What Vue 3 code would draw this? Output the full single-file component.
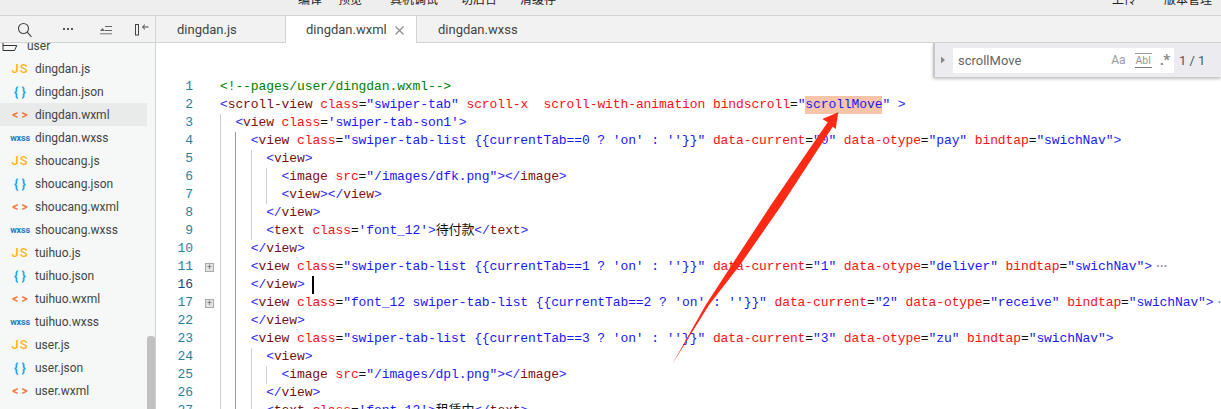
<script setup>
const files = [
  ['dingdan.js', 'js'], ['dingdan.json', 'json'], ['dingdan.wxml', 'wxml', true], ['dingdan.wxss', 'wxss'],
  ['shoucang.js', 'js'], ['shoucang.json', 'json'], ['shoucang.wxml', 'wxml'], ['shoucang.wxss', 'wxss'],
  ['tuihuo.js', 'js'], ['tuihuo.json', 'json'], ['tuihuo.wxml', 'wxml'], ['tuihuo.wxss', 'wxss'],
  ['user.js', 'js'], ['user.json', 'json'], ['user.wxml', 'wxml'],
].map(([name, type, active]) => ({
  name, type, active,
  glyph: { js: 'JS', json: '{ }', wxml: '< >', wxss: 'wxss' }[type],
}))

const source = [
  [1, 0, `<!--pages/user/dingdan.wxml-->`],
  [2, 0, `<scroll-view class="swiper-tab" scroll-x  scroll-with-animation bindscroll="scrollMove" >`],
  [3, 1, `<view class='swiper-tab-son1'>`],
  [4, 2, `<view class="swiper-tab-list {{currentTab==0 ? 'on' : ''}}" data-current="0" data-otype="pay" bindtap="swichNav">`],
  [5, 3, `<view>`],
  [6, 4, `<image src="/images/dfk.png"></image>`],
  [7, 4, `<view></view>`],
  [8, 3, `</view>`],
  [9, 3, `<text class='font_12'>待付款</text>`],
  [10, 2, `</view>`],
  [11, 2, `<view class="swiper-tab-list {{currentTab==1 ? 'on' : ''}}" data-current="1" data-otype="deliver" bindtap="swichNav">`, 'fold'],
  [16, 2, `</view>`, 'cursor'],
  [17, 2, `<view class="font_12 swiper-tab-list {{currentTab==2 ? 'on' : ''}}" data-current="2" data-otype="receive" bindtap="swichNav">`, 'fold'],
  [22, 2, `</view>`],
  [23, 2, `<view class="swiper-tab-list {{currentTab==3 ? 'on' : ''}}" data-current="3" data-otype="zu" bindtap="swichNav">`],
  [24, 3, `<view>`],
  [25, 4, `<image src="/images/dpl.png"></image>`],
  [26, 3, `</view>`],
  [27, 3, `<text class='font_12'>租赁中</text>`],
]

function tokenize(src) {
  const out = []
  const re = /<!--.*?-->|<\/?|\/?>|"[^"]*"|'[^']*'|=|[^\s<>="']+|\s+/g
  let inTag = false
  let expectName = false
  for (const m of src.matchAll(re)) {
    const s = m[0]
    if (s.startsWith('<!--')) out.push({ c: 'cm', s })
    else if (s === '<' || s === '</') { out.push({ c: 'br', s }); inTag = true; expectName = true }
    else if (s === '>' || s === '/>') { out.push({ c: 'br', s }); inTag = false }
    else if (s[0] === '"' && s.includes('scrollMove')) {
      out.push({ c: 'st', s: '"' }, { c: 'st hl', s: 'scrollMove' }, { c: 'st', s: '"' })
    }
    else if (s[0] === '"' || s[0] === "'") out.push({ c: 'st', s })
    else if (s === '=') out.push({ c: 'eq', s })
    else if (/^\s+$/.test(s)) out.push({ c: 'eq', s })
    else if (inTag && expectName) { out.push({ c: 'tg', s }); expectName = false }
    else if (inTag) out.push({ c: 'at', s })
    else out.push({ c: 'eq', s })
  }
  return out
}

const rows = source.map(([num, level, text, mark]) => ({
  num, level, mark, tokens: tokenize(text),
}))
</script>

<template>
  <div class="window">
    <header class="menu">
      <span>编译</span><span class="m16">预览</span><span class="m28">真机调试</span><span class="m23">切后台</span><span class="m23">清缓存</span>
      <span class="push">上传</span><span class="m28">版本管理</span>
    </header>

    <div class="bars">
      <div class="tools">
        <svg class="ic i1" width="16" height="16" viewBox="0 0 16 16" fill="none" stroke="#444" stroke-width="1.1">
          <circle cx="6.5" cy="6.5" r="5" /><path d="M10.2 10.2 14.5 14.8" />
        </svg>
        <svg class="ic i2" width="16" height="16" viewBox="0 0 16 16" fill="#555">
          <rect x="3" y="7" width="2" height="2" /><rect x="7" y="7" width="2" height="2" /><rect x="11" y="7" width="2" height="2" />
        </svg>
        <svg class="ic i2b" width="16" height="16" viewBox="0 0 16 16" fill="#666">
          <path d="M2 9 4.5 6 7 9Z" /><rect x="7" y="4" width="7" height="1" /><rect x="7" y="8" width="7" height="1" /><rect x="2" y="11" width="12" height="1.4" fill="#999" />
        </svg>
        <svg class="ic i3" width="16" height="16" viewBox="0 0 16 16" fill="none" stroke="#444" stroke-width="1">
          <rect x="1.5" y="2.5" width="3" height="10.5" /><path d="M14.5 5H8.5M11 2.6 8.5 5 11 7.4" />
        </svg>
      </div>
      <nav class="tabs">
        <div class="tab">dingdan.js</div>
        <div class="tab on">dingdan.wxml
          <svg class="close" width="9" height="9" viewBox="0 0 9 9" stroke="#888" stroke-width="1.1" fill="none"><path d="M.5.5 8.5 8.5M8.5.5 .5 8.5" /></svg>
        </div>
        <div class="tab plain">dingdan.wxss</div>
      </nav>
    </div>

    <div class="body">
      <aside class="side">
        <div class="tree">
          <div class="row folder">
            <svg class="fd" width="16" height="16" viewBox="0 0 16 16" fill="none" stroke="#333" stroke-width="1">
              <path d="M1 5.5V15.5H12.5L14.8 10.5H1" />
            </svg>
            user
          </div>
          <div v-for="f in files" :key="f.name" class="row" :class="{ act: f.active }">
            <span class="glyph" :class="f.type">{{ f.glyph }}</span>{{ f.name }}
          </div>
        </div>
        <div class="sbar"></div>
      </aside>

      <main class="editor">
        <div v-for="r in rows" :key="r.num" class="line">
          <span class="num" :class="{ cur: r.mark === 'cursor' }">{{ r.num }}</span>
          <span class="foldcell"><span v-if="r.mark === 'fold'" class="fold">+</span></span>
          <span class="code">
            <span v-for="n in r.level" :key="n" class="guide" :class="{ dark: n === 2 }"></span>
            <span v-for="(t, i) in r.tokens" :key="i" :class="t.c">{{ t.s }}</span>
            <span v-if="r.mark === 'fold'" class="more">···</span>
            <span v-if="r.mark === 'cursor'" class="caret"></span>
          </span>
        </div>

        <div class="find">
          <svg class="chev" width="6" height="8" viewBox="0 0 6 8"><path d="M1 .5 5 4 1 7.5Z" fill="#888" /></svg>
          <div class="input">
            <span class="query">scrollMove</span>
            <span class="opt aa">Aa</span>
            <span class="opt ab">Abl</span>
            <span class="opt re">.*</span>
          </div>
          <span class="count">1 / 1</span>
        </div>

        <svg class="arrow" width="1221" height="409" viewBox="0 0 1221 409">
          <path d="M672.3 364 705.7 305 731.7 265 771 205 827.7 122.3 822.3 119 838.3 112.3 835.7 129 832.7 126.7 781.7 205 740 265 709 305Z" fill="#ff2a16" />
        </svg>
      </main>
    </div>
  </div>
</template>

<style>
html, body { margin: 0; overflow: hidden; background: #fff; }
</style>

<style scoped>
.window {
  width: 1221px;
  height: 409px;
  overflow: hidden;
  display: flex;
  flex-direction: column;
  font-family: Roboto, "Noto Sans CJK SC", sans-serif;
  color: #444;
}
.menu {
  flex: none;
  box-sizing: border-box;
  height: 16px;
  padding: 0 9px 0 298px;
  display: flex;
  background: #eeeeee;
  border-bottom: 1px solid #d2d2d2;
  overflow: hidden;
  font-size: 12px;
  line-height: 12px;
  color: #222;
}
.menu span { margin-top: -6px; }
.menu .m16 { margin-left: 16px; }
.menu .m28 { margin-left: 28px; }
.menu .m23 { margin-left: 23px; }
.menu .push { margin-left: auto; }

.bars {
  flex: none;
  height: 27px;
  box-sizing: border-box;
  display: flex;
  background: #f2f2f2;
  border-bottom: 1px solid #d2d2d2;
}
.tools {
  width: 155px;
  flex: none;
  box-sizing: content-box;
  display: flex;
  align-items: center;
  border-right: 1px solid #d2d2d2;
}
.ic { flex: none; }
.i1 { margin-left: 17px; margin-top: 1px; }
.i2 { margin-left: 27px; }
.i2b { margin-left: 22px; margin-top: 1px; }
.i3 { margin-left: 20px; margin-top: 1px; }
.tabs { display: flex; height: 27px; }
.tab {
  box-sizing: border-box;
  width: 130px;
  height: 26px;
  padding-left: 21px;
  font-size: 13px;
  line-height: 28px;
  color: #444;
  border-right: 1px solid #d2d2d2;
}
.tab.on {
  position: relative;
  width: 131px;
  height: 27px;
  background: #fff;
  color: #444;
  padding-left: 20px;
}
.tab.plain { border-right: 0; }
.close {
  position: absolute;
  left: 109px;
  top: 10px;
}

.body { flex: 1; display: flex; min-height: 0; }
.side {
  position: relative;
  flex: none;
  width: 155px;
  overflow: hidden;
  background: #f6f8f8;
  border-right: 1px solid #d2d2d2;
}
.tree { margin-top: -9px; width: 147px; }
.row {
  box-sizing: border-box;
  height: 23px;
  padding-top: 1px;
  display: flex;
  align-items: center;
  font-size: 12px;
  line-height: 22px;
  color: #444;
  white-space: pre;
}
.row.act { background: #e9ebeb; }
.folder { padding-left: 24px; position: relative; }
.fd { position: absolute; left: 2px; top: 1px; }
.glyph {
  flex: none;
  box-sizing: border-box;
  width: 35px;
  padding-left: 5px;
  text-align: center;
  font-weight: 700;
}
.glyph.js { color: #ffb31a; font-weight: 500; font-size: 13px; letter-spacing: 1px; }
.glyph.json { color: #1ea5ee; font-size: 13px; }
.glyph.wxml { color: #f5733c; font-size: 12px; }
.glyph.wxss { color: #2a78bd; font-size: 9px; letter-spacing: -.2px; }
.sbar {
  position: absolute;
  left: 147px;
  top: 293px;
  width: 8px;
  height: 80px;
  border-radius: 3px 3px 0 0;
  background: #c1c1c1;
}

.editor {
  position: relative;
  flex: 1;
  min-width: 0;
  padding-top: 35px;
  background: #fff;
  overflow: hidden;
  font-family: "Liberation Mono", "Noto Sans CJK SC", monospace;
  font-size: 13px;
  letter-spacing: -.1px;
}
.line {
  display: flex;
  height: 18px;
  line-height: 18px;
  white-space: pre;
}
.num {
  flex: none;
  width: 37px;
  text-align: right;
  color: #2b7f9e;
}
.num.cur { color: #1f3f7f; }
.foldcell {
  flex: none;
  width: 27px;
  padding-left: 12px;
  box-sizing: border-box;
}
.fold {
  display: block;
  box-sizing: border-box;
  width: 9px;
  height: 9px;
  margin-top: 5px;
  border: 1px solid #aaa;
  background: #e4e4e4;
  color: #555;
  font: 9px/7px "Liberation Sans", sans-serif;
  letter-spacing: 0;
  text-align: center;
}
.code { flex: none; display: block; }
.guide {
  display: inline-block;
  box-sizing: border-box;
  width: 15.4px;
  height: 18px;
  vertical-align: top;
  border-left: 1px solid #cfcfcf;
}
.guide.dark { border-left-color: #9a9a9a; }
.cm { color: #008000; }
.br { color: #2a2aff; }
.tg { color: #7a1010; }
.at { color: #ff1010; }
.st { color: #1818ff; }
.eq { color: #111; }
.hl { background: #f6c4a8; display: inline-block; height: 18px; }
.more { color: #8a8aa0; margin-left: 2px; letter-spacing: -4px; }
.caret {
  display: inline-block;
  width: 2px;
  height: 18px;
  margin-left: 7px;
  vertical-align: top;
  background: #000;
}

.find {
  position: absolute;
  top: 0;
  right: 0;
  box-sizing: border-box;
  width: 288px;
  height: 34px;
  display: flex;
  align-items: center;
  background: #ececf0;
  border-left: 2px solid #c6c6c6;
  box-shadow: 0 2px 3px rgba(0, 0, 0, .25);
  font-family: Roboto, sans-serif;
  letter-spacing: 0;
}
.chev { margin-left: 5px; flex: none; }
.input {
  box-sizing: border-box;
  width: 221px;
  height: 25px;
  margin-left: 7px;
  padding-left: 5px;
  display: flex;
  align-items: center;
  background: #fff;
}
.query { font-size: 13px; color: #666; flex: 1; }
.opt { color: #999; font-size: 12px; }
.aa { margin-right: 9px; }
.ab {
  margin-right: 8px;
  font-size: 10.5px;
  line-height: 13px;
  padding: 0 1px;
  border-top: 1px solid #999;
  border-bottom: 1px solid #777;
}
.re { margin-right: 5px; font-size: 15px; font-weight: 700; color: #888; letter-spacing: -1px; }
.count { margin-left: 5px; font-size: 13px; color: #555; }

.arrow {
  position: absolute;
  left: -156px;
  top: -43px;
  pointer-events: none;
}
</style>
